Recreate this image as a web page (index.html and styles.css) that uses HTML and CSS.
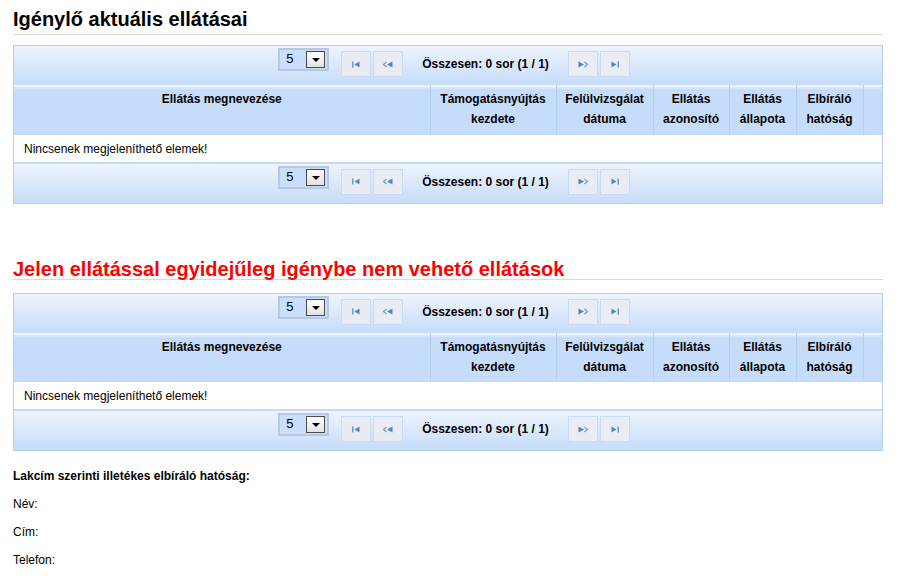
FILE: index.html
```html
<!DOCTYPE html>
<html lang="hu">

<head>
    <meta charset="UTF-8">
    <title>Igénylő aktuális ellátásai</title>
    <link rel="stylesheet" href="styles.css">
</head>

<body>
    <div class="page">

        <!-- Aktuális ellátások -->
        <h2 class="section-title">Igénylő aktuális ellátásai</h2>
        <div class="grid">
            <div class="pager">
                <div class="page-size"><span>5</span><i class="drop"></i></div>
                <div class="nav-group">
                    <button class="nav"><svg width="10" height="7" viewBox="0 0 10 7"><rect x="1" y="0.5" width="1.5" height="6" fill="#6a9bd2"/><polygon points="3.5,3.5 8.5,0.5 8.5,6.5" fill="#4f87c6"/></svg></button>
                    <button class="nav"><svg width="12" height="7" viewBox="0 0 12 7"><polyline points="4.5,1 1.5,3.5 4.5,6" fill="none" stroke="#6a9bd2" stroke-width="1.2"/><polygon points="5,3.5 10.5,0.5 10.5,6.5" fill="#4f87c6"/></svg></button>
                </div>
                <div class="total">Összesen: 0 sor (1 / 1)</div>
                <div class="nav-group">
                    <button class="nav"><svg width="12" height="7" viewBox="0 0 12 7"><polygon points="1.5,0.5 7,3.5 1.5,6.5" fill="#4f87c6"/><polyline points="7.5,1 10.5,3.5 7.5,6" fill="none" stroke="#6a9bd2" stroke-width="1.2"/></svg></button>
                    <button class="nav"><svg width="10" height="7" viewBox="0 0 10 7"><polygon points="1.5,0.5 6.5,3.5 1.5,6.5" fill="#4f87c6"/><rect x="7.5" y="0.5" width="1.5" height="6" fill="#6a9bd2"/></svg></button>
                </div>
            </div>
            <table class="data">
                <thead>
                    <tr>
                        <th class="c-name">Ellátás megnevezése</th>
                        <th class="c-start">Támogatásnyújtás kezdete</th>
                        <th class="c-review">Felülvizsgálat dátuma</th>
                        <th class="c-id">Ellátás azonosító</th>
                        <th class="c-state">Ellátás állapota</th>
                        <th class="c-auth">Elbíráló hatóság</th>
                        <th class="c-fill"></th>
                    </tr>
                </thead>
                <tbody>
                    <tr>
                        <td colspan="7" class="empty">Nincsenek megjeleníthető elemek!</td>
                    </tr>
                </tbody>
            </table>
            <div class="pager pager-bottom">
                <div class="page-size"><span>5</span><i class="drop"></i></div>
                <div class="nav-group">
                    <button class="nav"><svg width="10" height="7" viewBox="0 0 10 7"><rect x="1" y="0.5" width="1.5" height="6" fill="#6a9bd2"/><polygon points="3.5,3.5 8.5,0.5 8.5,6.5" fill="#4f87c6"/></svg></button>
                    <button class="nav"><svg width="12" height="7" viewBox="0 0 12 7"><polyline points="4.5,1 1.5,3.5 4.5,6" fill="none" stroke="#6a9bd2" stroke-width="1.2"/><polygon points="5,3.5 10.5,0.5 10.5,6.5" fill="#4f87c6"/></svg></button>
                </div>
                <div class="total">Összesen: 0 sor (1 / 1)</div>
                <div class="nav-group">
                    <button class="nav"><svg width="12" height="7" viewBox="0 0 12 7"><polygon points="1.5,0.5 7,3.5 1.5,6.5" fill="#4f87c6"/><polyline points="7.5,1 10.5,3.5 7.5,6" fill="none" stroke="#6a9bd2" stroke-width="1.2"/></svg></button>
                    <button class="nav"><svg width="10" height="7" viewBox="0 0 10 7"><polygon points="1.5,0.5 6.5,3.5 1.5,6.5" fill="#4f87c6"/><rect x="7.5" y="0.5" width="1.5" height="6" fill="#6a9bd2"/></svg></button>
                </div>
            </div>
        </div>

        <!-- Kizáró ellátások -->
        <h2 class="section-title warning">Jelen ellátással egyidejűleg igénybe nem vehető ellátások</h2>
        <div class="grid">
            <div class="pager">
                <div class="page-size"><span>5</span><i class="drop"></i></div>
                <div class="nav-group">
                    <button class="nav"><svg width="10" height="7" viewBox="0 0 10 7"><rect x="1" y="0.5" width="1.5" height="6" fill="#6a9bd2"/><polygon points="3.5,3.5 8.5,0.5 8.5,6.5" fill="#4f87c6"/></svg></button>
                    <button class="nav"><svg width="12" height="7" viewBox="0 0 12 7"><polyline points="4.5,1 1.5,3.5 4.5,6" fill="none" stroke="#6a9bd2" stroke-width="1.2"/><polygon points="5,3.5 10.5,0.5 10.5,6.5" fill="#4f87c6"/></svg></button>
                </div>
                <div class="total">Összesen: 0 sor (1 / 1)</div>
                <div class="nav-group">
                    <button class="nav"><svg width="12" height="7" viewBox="0 0 12 7"><polygon points="1.5,0.5 7,3.5 1.5,6.5" fill="#4f87c6"/><polyline points="7.5,1 10.5,3.5 7.5,6" fill="none" stroke="#6a9bd2" stroke-width="1.2"/></svg></button>
                    <button class="nav"><svg width="10" height="7" viewBox="0 0 10 7"><polygon points="1.5,0.5 6.5,3.5 1.5,6.5" fill="#4f87c6"/><rect x="7.5" y="0.5" width="1.5" height="6" fill="#6a9bd2"/></svg></button>
                </div>
            </div>
            <table class="data">
                <thead>
                    <tr>
                        <th class="c-name">Ellátás megnevezése</th>
                        <th class="c-start">Támogatásnyújtás kezdete</th>
                        <th class="c-review">Felülvizsgálat dátuma</th>
                        <th class="c-id">Ellátás azonosító</th>
                        <th class="c-state">Ellátás állapota</th>
                        <th class="c-auth">Elbíráló hatóság</th>
                        <th class="c-fill"></th>
                    </tr>
                </thead>
                <tbody>
                    <tr>
                        <td colspan="7" class="empty">Nincsenek megjeleníthető elemek!</td>
                    </tr>
                </tbody>
            </table>
            <div class="pager pager-bottom">
                <div class="page-size"><span>5</span><i class="drop"></i></div>
                <div class="nav-group">
                    <button class="nav"><svg width="10" height="7" viewBox="0 0 10 7"><rect x="1" y="0.5" width="1.5" height="6" fill="#6a9bd2"/><polygon points="3.5,3.5 8.5,0.5 8.5,6.5" fill="#4f87c6"/></svg></button>
                    <button class="nav"><svg width="12" height="7" viewBox="0 0 12 7"><polyline points="4.5,1 1.5,3.5 4.5,6" fill="none" stroke="#6a9bd2" stroke-width="1.2"/><polygon points="5,3.5 10.5,0.5 10.5,6.5" fill="#4f87c6"/></svg></button>
                </div>
                <div class="total">Összesen: 0 sor (1 / 1)</div>
                <div class="nav-group">
                    <button class="nav"><svg width="12" height="7" viewBox="0 0 12 7"><polygon points="1.5,0.5 7,3.5 1.5,6.5" fill="#4f87c6"/><polyline points="7.5,1 10.5,3.5 7.5,6" fill="none" stroke="#6a9bd2" stroke-width="1.2"/></svg></button>
                    <button class="nav"><svg width="10" height="7" viewBox="0 0 10 7"><polygon points="1.5,0.5 6.5,3.5 1.5,6.5" fill="#4f87c6"/><rect x="7.5" y="0.5" width="1.5" height="6" fill="#6a9bd2"/></svg></button>
                </div>
            </div>
        </div>

        <!-- Illetékes hatóság -->
        <div class="authority">
            <p class="label">Lakcím szerinti illetékes elbíráló hatóság:</p>
            <p>Név:</p>
            <p>Cím:</p>
            <p>Telefon:</p>
        </div>
    </div>
</body>

</html>
```

FILE: styles.css
```css
body {
    margin: 0;
    padding: 0;
    font-family: "Liberation Sans", Arial, sans-serif;
    font-size: 12px;
    color: #000;
    background-color: #fff;
}

.page {
    width: 870px;
    margin-left: 13px;
    padding-top: 7px;
}

.section-title {
    margin: 0 0 10px 0;
    font-size: 20px;
    line-height: 24px;
    font-weight: bold;
    padding-bottom: 3px;
    border-bottom: 1px solid #d9d9d9;
}

.section-title.warning {
    color: #ff0000;
    margin-top: 55px;
    margin-bottom: 13px;
    line-height: 20px;
    padding-bottom: 0;
}

.grid {
    border: 1px solid #b4cdee;
}

.pager {
    height: 39px;
    display: flex;
    align-items: flex-start;
    justify-content: center;
    padding-left: 12px;
    background: linear-gradient(#eef4fd, #c6dcfa);
}

.pager-bottom {
    border-top: 2px solid #c5dbf8;
}

.page-size {
    margin-top: 2px;
    width: 47px;
    height: 19px;
    border: 2px solid #b8c9df;
    background-color: #c9dffc;
    position: relative;
    font-size: 13px;
}

.page-size span {
    position: absolute;
    left: 6px;
    top: 1px;
}

.page-size .drop {
    position: absolute;
    right: 2px;
    top: 1px;
    width: 17px;
    height: 15px;
    border: 1px solid #4a4a4a;
    background: linear-gradient(#ffffff, #e2e2e2);
}

.page-size .drop::after {
    content: "";
    position: absolute;
    left: 5px;
    top: 6px;
    border-left: 4px solid transparent;
    border-right: 4px solid transparent;
    border-top: 4px solid #000;
}

.nav-group {
    display: flex;
    gap: 2px;
    margin-top: 5px;
}

.page-size + .nav-group {
    margin-left: 12px;
}

.nav {
    width: 30px;
    height: 26px;
    padding: 0;
    border: 1px solid #c9dbf3;
    background-color: #e9edf3;
    display: flex;
    align-items: center;
    justify-content: center;
    cursor: pointer;
}

.total {
    margin: 11px 19px 0 19px;
    font-weight: bold;
    line-height: 14px;
}

.data {
    width: 100%;
    border-collapse: collapse;
    table-layout: fixed;
}

.data th {
    height: 49px;
    padding: 4px 4px 0 4px;
    vertical-align: top;
    font-weight: bold;
    line-height: 20px;
    text-align: center;
    background: linear-gradient(#f4f8ff 0, #c6dcfb 5px);
    border-left: 1px solid #b5cff1;
    box-sizing: border-box;
}

.data th:first-child {
    border-left: none;
}

.c-name { width: 416px; }
.c-start { width: 126px; }
.c-review { width: 97px; }
.c-id { width: 76px; }
.c-state { width: 67px; }
.c-auth { width: 67px; }

.data td.empty {
    height: 26px;
    padding: 1px 0 0 10px;
    background-color: #fff;
    border-top: 1px solid #c5dbf8;
}

.authority {
    margin-top: 11px;
}

.authority p {
    margin: 0;
    line-height: 28px;
}

.authority .label {
    font-weight: bold;
}
```
